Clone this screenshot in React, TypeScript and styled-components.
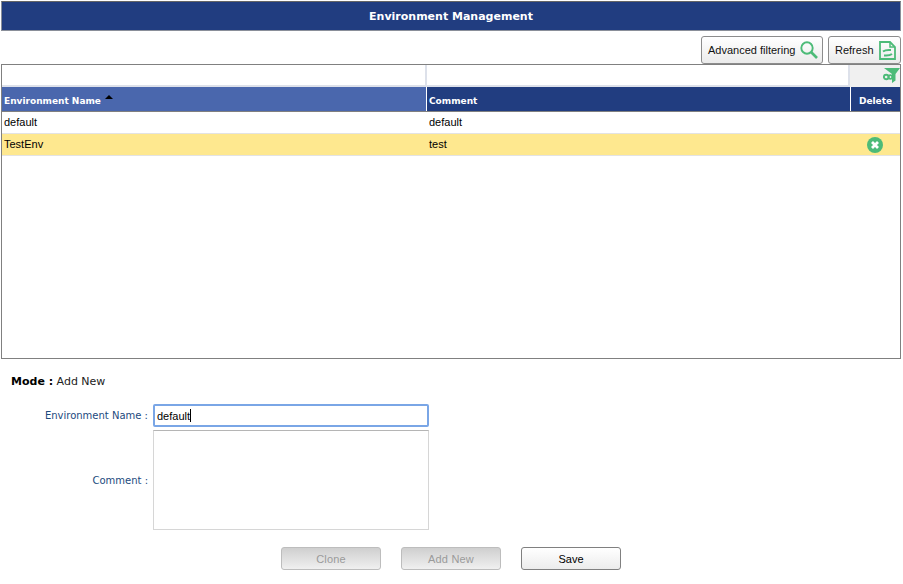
import React from "react";
import styled, { createGlobalStyle } from "styled-components";

const Global = createGlobalStyle`
  html, body { margin: 0; padding: 0; background: #fff; }
  body { font-family: "Liberation Sans", Arial, sans-serif; }
`;
const Page = styled.div`
  width: 900px;
  margin: 1px 0 0 1px;
  display: flex;
  flex-direction: column;
`;
const TitleBar = styled.div`
  height: 28px;
  border: 1px solid #8a8f99;
  border-top-color: #666;
  background: #213d80;
  color: #fff;
  font: bold 11px "DejaVu Sans", Verdana, sans-serif;
  display: flex;
  align-items: center;
  justify-content: center;
`;
const Toolbar = styled.div`
  height: 28px;
  margin-top: 5px;
  display: flex;
  justify-content: flex-end;
  gap: 5px;
`;
const ToolButton = styled.button<{ $w: number }>`
  height: 28px;
  box-sizing: border-box;
  padding: 0 0 0 6px;
  width: ${(p) => p.$w}px;
  display: flex;
  align-items: center;
  justify-content: flex-start;
  gap: 5px;
  white-space: nowrap;
  border: 1px solid #8c8c8c;
  border-radius: 3px;
  background: linear-gradient(#ffffff, #ebebeb);
  font: 11px "Liberation Sans", Arial, sans-serif;
  color: #111;
`;
const Grid = styled.div`
  height: 293px;
  border: 1px solid #808080;
  display: flex;
  flex-direction: column;
`;
const Columns = styled.div`
  display: grid;
  grid-template-columns: 425px 424px 1fr;
`;
const FilterRow = styled.div`
  height: 22px;
  display: grid;
  grid-template-columns: 425px 423px 1fr;
`;
const FilterCell = styled.div`
  border-right: 2px solid #dde1ea;
  border-bottom: 2px solid #dde1ea;
  box-sizing: border-box;
  background: #fff;
`;
const FilterIconCell = styled.div`
  background: #f0f0f0;
  display: flex;
  justify-content: flex-end;
  align-items: flex-start;
  overflow: hidden;
`;
const HeaderRow = styled(Columns)`
  height: 25px;
  border-bottom: 1px solid #808080;
  box-sizing: border-box;
`;
const HeaderCell = styled.div<{ $active?: boolean; $center?: boolean }>`
  background: ${(p) => (p.$active ? "#4a67ad" : "#213d80")};
  color: #fff;
  font: bold 9px "DejaVu Sans", Verdana, sans-serif;
  display: flex;
  align-items: center;
  justify-content: ${(p) => (p.$center ? "center" : "flex-start")};
  padding: 3px 0 0 ${(p) => (p.$center ? 0 : 2)}px;
  border-right: 1px solid #fff;
  box-sizing: border-box;
  &:last-child { border-right: 0; }
`;
const SortArrow = styled.span`
  width: 0;
  height: 0;
  margin: -8px 0 0 4px;
  border-left: 4px solid transparent;
  border-right: 4px solid transparent;
  border-bottom: 4px solid #000;
`;
const Row = styled(Columns)<{ $selected?: boolean }>`
  height: 22px;
  box-sizing: border-box;
  border-bottom: 1px solid #e3e3e3;
  background: ${(p) => (p.$selected ? "#fee88f" : "#fff")};
`;
const Cell = styled.div`
  font: 11px "Liberation Sans", Arial, sans-serif;
  color: #000;
  padding: 0 0 2px 2px;
  display: flex;
  align-items: center;
`;
const IconCell = styled.div`
  display: flex;
  align-items: center;
  justify-content: center;
  padding-right: 2px;
`;
const ModeLine = styled.div`
  margin: 16px 0 0 10px;
  height: 14px;
  font: 11px "DejaVu Sans", Verdana, sans-serif;
  color: #222;
  b { color: #000; }
`;
const Form = styled.div`
  margin-top: 15px;
  display: grid;
  grid-template-columns: 147px 276px;
  column-gap: 5px;
  row-gap: 3px;
  align-items: center;
`;
const Label = styled.label`
  font: 10px "DejaVu Sans", Verdana, sans-serif;
  color: #1c4a7e;
  text-align: right;
`;
const NameInput = styled.div`
  height: 23px;
  box-sizing: border-box;
  border: 2px solid #7aa6e6;
  border-radius: 2px;
  padding-left: 2px;
  font: 11px "Liberation Sans", Arial, sans-serif;
  color: #000;
  display: flex;
  align-items: center;
`;
const Caret = styled.span`
  width: 1px;
  height: 13px;
  background: #000;
`;
const CommentBox = styled.div`
  height: 100px;
  box-sizing: border-box;
  border: 1px solid #d6d6d6;
  border-top-color: #b5b5b5;
`;
const Actions = styled.div`
  margin-top: 17px;
  padding-left: 280px;
  display: flex;
  gap: 20px;
`;
const ActionButton = styled.button<{ disabled?: boolean }>`
  width: 100px;
  height: 23px;
  box-sizing: border-box;
  padding: 0;
  border: 1px solid ${(p) => (p.disabled ? "#bdbdbd" : "#808080")};
  border-radius: 3px;
  background: ${(p) => (p.disabled ? "linear-gradient(#cfcfcf, #f0f0f0)" : "linear-gradient(#ffffff, #ececec)")};
  color: ${(p) => (p.disabled ? "#9a9a9a" : "#000")};
  font: 11px "Liberation Sans", Arial, sans-serif;
  letter-spacing: ${(p) => (p.disabled ? "0.2px" : "0")};
`;

const GREEN = "#4dbb78";

const SearchIcon = () => (
  <svg width="18" height="18" viewBox="0 0 18 18" fill="none" stroke={GREEN}>
    <circle cx="7" cy="7" r="5.7" strokeWidth="1.9" />
    <path d="M11 11l6 6" strokeWidth="2.6" />
  </svg>
);
const RefreshIcon = () => (
  <svg width="17" height="19" viewBox="0 0 17 19" fill="none" stroke={GREEN}>
    <path d="M1 1h10l5 5v12H1z" strokeWidth="1.8" />
    <path d="M11 1v5h5" strokeWidth="1.5" />
    <path d="M4 10.5c2.5-2 5-1.5 8-1.5M13 13c-2.5 2-5 1.5-8 1.5" strokeWidth="2" />
  </svg>
);
const FilterIcon = () => (
  <svg width="17" height="18" viewBox="0 0 17 18">
    <path d="M1 3h16L12.5 9v6.5L9 18V9z" fill={GREEN} />
    <circle cx="3.2" cy="12" r="2.3" fill="none" stroke={GREEN} strokeWidth="1.9" />
    <circle cx="7.4" cy="12" r="1.8" fill="none" stroke={GREEN} strokeWidth="1.8" />
  </svg>
);
const DeleteIcon = () => (
  <svg width="16" height="16" viewBox="0 0 16 16">
    <circle cx="8" cy="8" r="8" fill={GREEN} />
    <path d="M5 5l6 6M11 5l-6 6" stroke="#fff" strokeWidth="2.8" />
  </svg>
);

export default function App() {
  return (
    <Page>
      <Global />
      <TitleBar>Environment Management</TitleBar>
      <Toolbar>
        <ToolButton $w={122}>Advanced filtering <SearchIcon /></ToolButton>
        <ToolButton $w={73}>Refresh <RefreshIcon /></ToolButton>
      </Toolbar>
      <Grid>
        <FilterRow>
          <FilterCell />
          <FilterCell />
          <FilterIconCell><FilterIcon /></FilterIconCell>
        </FilterRow>
        <HeaderRow>
          <HeaderCell $active>Environment Name<SortArrow /></HeaderCell>
          <HeaderCell>Comment</HeaderCell>
          <HeaderCell $center>Delete</HeaderCell>
        </HeaderRow>
        <Row>
          <Cell>default</Cell>
          <Cell>default</Cell>
          <IconCell />
        </Row>
        <Row $selected>
          <Cell>TestEnv</Cell>
          <Cell>test</Cell>
          <IconCell><DeleteIcon /></IconCell>
        </Row>
      </Grid>
      <ModeLine><b>Mode :</b> Add New</ModeLine>
      <Form>
        <Label>Environment Name :</Label>
        <NameInput>default<Caret /></NameInput>
        <Label>Comment :</Label>
        <CommentBox />
      </Form>
      <Actions>
        <ActionButton disabled>Clone</ActionButton>
        <ActionButton disabled>Add New</ActionButton>
        <ActionButton>Save</ActionButton>
      </Actions>
    </Page>
  );
}
